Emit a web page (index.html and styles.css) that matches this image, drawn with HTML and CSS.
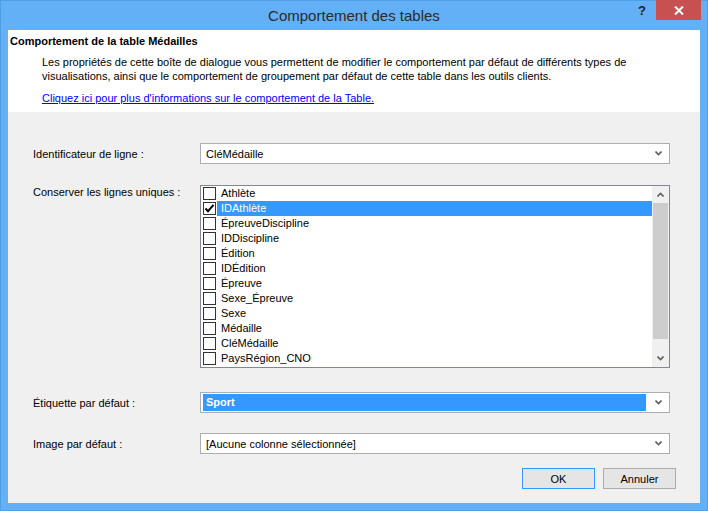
FILE: index.html
```html
<!DOCTYPE html>
<html lang="fr">
<head>
<meta charset="utf-8">
<title>Comportement des tables</title>
<link rel="stylesheet" href="styles.css">
</head>
<body>
<div class="window">
  <div class="titlebar">
    <div class="tb-left"></div>
    <div class="tb-title">Comportement des tables</div>
    <div class="tb-controls">
      <span class="tb-help">?</span>
      <span class="tb-close">
        <svg width="10" height="9" viewBox="0 0 10 9"><path d="M1 0.5 L9 8.5 M9 0.5 L1 8.5" stroke="#fff" stroke-width="2" fill="none"/></svg>
      </span>
    </div>
  </div>
  <div class="client">
    <div class="header">
      <div class="h-title">Comportement de la table Médailles</div>
      <div class="h-desc">Les propriétés de cette boîte de dialogue vous permettent de modifier le comportement par défaut de différents types de visualisations, ainsi que le comportement de groupement par défaut de cette table dans les outils clients.</div>
      <a class="h-link" href="#">Cliquez ici pour plus d'informations sur le comportement de la Table.</a>
    </div>
    <div class="form">
      <div class="row row-id">
        <div class="label">Identificateur de ligne :</div>
        <div class="combo">
          <span class="combo-text">CléMédaille</span>
          <svg class="chev" width="7" height="5" viewBox="0 0 7 5"><path d="M0.5 0.5 L3.5 3.5 L6.5 0.5" stroke="#606060" stroke-width="1.6" fill="none"/></svg>
        </div>
      </div>
      <div class="row row-list">
        <div class="label label-top">Conserver les lignes uniques :</div>
        <div class="listbox">
          <div class="items">
            <div class="item"><span class="cb"></span><span class="txt">Athlète</span></div>
            <div class="item"><span class="cb"><svg width="11" height="11" viewBox="0 0 11 11"><path d="M1.5 5.5 L4 8.2 L9.5 1.8" stroke="#000" stroke-width="2" fill="none"/></svg></span><span class="txt sel">IDAthlète</span></div>
            <div class="item"><span class="cb"></span><span class="txt">ÉpreuveDiscipline</span></div>
            <div class="item"><span class="cb"></span><span class="txt">IDDiscipline</span></div>
            <div class="item"><span class="cb"></span><span class="txt">Édition</span></div>
            <div class="item"><span class="cb"></span><span class="txt">IDÉdition</span></div>
            <div class="item"><span class="cb"></span><span class="txt">Épreuve</span></div>
            <div class="item"><span class="cb"></span><span class="txt">Sexe_Épreuve</span></div>
            <div class="item"><span class="cb"></span><span class="txt">Sexe</span></div>
            <div class="item"><span class="cb"></span><span class="txt">Médaille</span></div>
            <div class="item"><span class="cb"></span><span class="txt">CléMédaille</span></div>
            <div class="item"><span class="cb"></span><span class="txt">PaysRégion_CNO</span></div>
          </div>
          <div class="scrollbar">
            <div class="sb-btn"><svg width="7" height="5" viewBox="0 0 7 5"><path d="M0.5 4.5 L3.5 1.5 L6.5 4.5" stroke="#606060" stroke-width="1.6" fill="none"/></svg></div>
            <div class="sb-track"><div class="sb-thumb"></div></div>
            <div class="sb-btn"><svg width="7" height="5" viewBox="0 0 7 5"><path d="M0.5 0.5 L3.5 3.5 L6.5 0.5" stroke="#606060" stroke-width="1.6" fill="none"/></svg></div>
          </div>
        </div>
      </div>
      <div class="row row-label">
        <div class="label">Étiquette par défaut :</div>
        <div class="combo combo-sel">
          <span class="combo-hl">Sport</span>
          <svg class="chev" width="7" height="5" viewBox="0 0 7 5"><path d="M0.5 0.5 L3.5 3.5 L6.5 0.5" stroke="#606060" stroke-width="1.6" fill="none"/></svg>
        </div>
      </div>
      <div class="row row-img">
        <div class="label">Image par défaut :</div>
        <div class="combo">
          <span class="combo-text">[Aucune colonne sélectionnée]</span>
          <svg class="chev" width="7" height="5" viewBox="0 0 7 5"><path d="M0.5 0.5 L3.5 3.5 L6.5 0.5" stroke="#606060" stroke-width="1.6" fill="none"/></svg>
        </div>
      </div>
      <div class="buttons">
        <button class="btn btn-default">OK</button>
        <button class="btn">Annuler</button>
      </div>
    </div>
  </div>
</div>
</body>
</html>
```
FILE: styles.css
```css
* { box-sizing: border-box; }
html, body { margin: 0; padding: 0; }
body {
  width: 708px;
  height: 511px;
  overflow: hidden;
  font-family: "Liberation Sans", Arial, sans-serif;
  font-size: 11px;
  color: #000;
}
.window {
  width: 708px;
  height: 511px;
  background: #63b0f6;
  border: 1px solid #4f9fe6;
  padding: 0 7px 7px 7px;
  display: flex;
  flex-direction: column;
}
.titlebar {
  height: 29px;
  flex: none;
  display: grid;
  grid-template-columns: 1fr auto 1fr;
}
.tb-title {
  font-size: 15px;
  line-height: 29px;
  color: #2b2b2b;
}
.tb-controls {
  display: flex;
  justify-content: flex-end;
  align-items: flex-start;
}
.tb-help {
  font-weight: bold;
  font-size: 13px;
  color: #222;
  line-height: 20px;
  margin-right: 10px;
}
.tb-close {
  width: 45px;
  height: 20px;
  margin-top: -1px;
  margin-right: -1px;
  background: #c75050;
  display: flex;
  align-items: center;
  justify-content: center;
}
.client {
  flex: 1;
  background: #f0f0f0;
  display: flex;
  flex-direction: column;
}
.header {
  background: #fff;
  height: 82px;
  flex: none;
  padding: 5px 0 0 2px;
  display: flex;
  flex-direction: column;
}
.h-title {
  font-weight: bold;
  line-height: 13px;
}
.h-desc {
  margin: 7px 40px 0 32px;
  line-height: 14px;
}
.h-link {
  margin: 8px 0 0 32px;
  line-height: 14px;
  color: #0000ff;
  text-decoration: underline;
  align-self: flex-start;
}
.form {
  flex: 1;
  padding: 0 24px 0 25px;
  display: flex;
  flex-direction: column;
}
.row {
  display: flex;
  align-items: center;
}
.row-id { margin-top: 31px; }
.row-list { margin-top: 21px; align-items: flex-start; }
.row-label { margin-top: 24px; }
.row-img { margin-top: 20px; }
.label {
  width: 167px;
  flex: none;
  line-height: 14px;
}
.label-top { padding-top: 0; }
.combo {
  width: 470px;
  height: 21px;
  background: #fff;
  border: 1px solid #abadb3;
  display: flex;
  align-items: center;
  padding: 0 7px 0 5px;
}
.combo-text { flex: 1; }
.combo-sel { padding: 1px 7px 1px 2px; align-items: stretch; }
.combo-hl {
  flex: 1;
  background: #3399ff;
  color: #fff;
  font-weight: bold;
  padding-left: 3px;
  line-height: 17px;
  margin-right: 9px;
}
.combo-sel .chev { align-self: center; }
.chev { flex: none; }
.listbox {
  width: 470px;
  height: 183px;
  background: #fff;
  border: 1px solid #828790;
  display: flex;
}
.items {
  flex: 1;
  padding: 0 0 0 2px;
}
.item {
  height: 15px;
  display: flex;
  align-items: center;
}
.cb {
  width: 13px;
  height: 13px;
  flex: none;
  border: 1px solid #333;
  background: #fff;
  display: flex;
  align-items: center;
  justify-content: center;
}
.txt {
  flex: 1;
  margin-left: 1px;
  padding-left: 4px;
  line-height: 15px;
}
.txt.sel {
  background: #3399ff;
  color: #fff;
}
.scrollbar {
  width: 17px;
  flex: none;
  background: #f0f0f0;
  padding: 0 1px;
  display: flex;
  flex-direction: column;
}
.sb-btn {
  height: 17px;
  display: flex;
  align-items: center;
  justify-content: center;
}
.sb-track {
  flex: 1;
  display: flex;
  flex-direction: column;
}
.sb-thumb {
  height: 136px;
  background: #cdcdcd;
}
.buttons {
  margin-top: 14px;
  display: flex;
  justify-content: flex-end;
  gap: 8px;
}
.btn {
  width: 73px;
  height: 21px;
  font-family: "Liberation Sans", Arial, sans-serif;
  font-size: 11px;
  color: #000;
  background: #e5e5e5;
  border: 1px solid #acacac;
  padding: 0;
  margin: 0;
}
.btn-default { border-color: #3399ff; }
```
